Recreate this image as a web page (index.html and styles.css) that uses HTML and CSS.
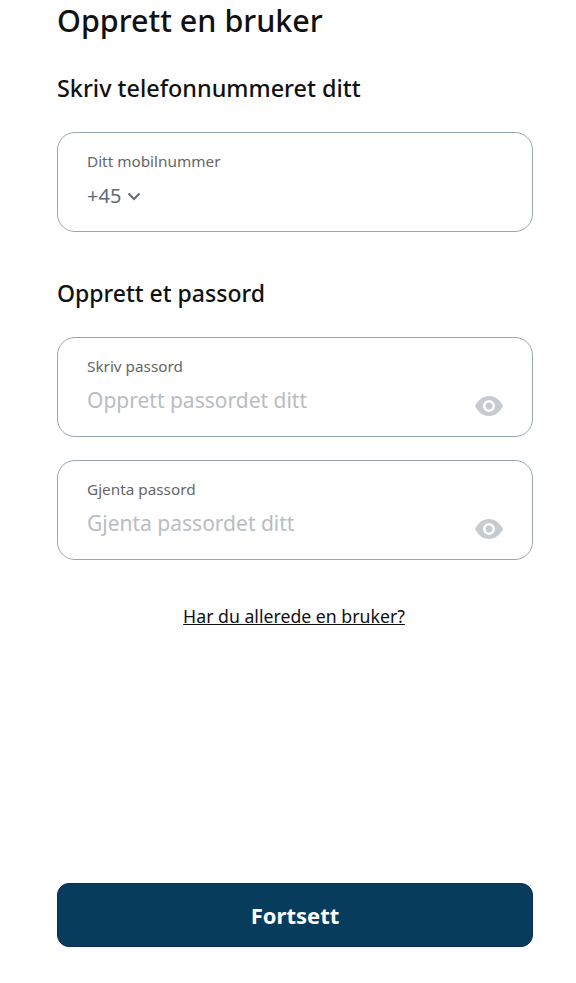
FILE: index.html
```html
<!DOCTYPE html>
<html lang="nb">
<head>
    <meta charset="UTF-8">
    <meta name="viewport" content="width=device-width, initial-scale=1.0">
    <title>Opprett en bruker</title>
    <link rel="stylesheet" href="styles.css">
</head>
<body>
    <main class="page">
        <h1>Opprett en bruker</h1>

        <h2 class="phone-heading">Skriv telefonnummeret ditt</h2>
        <div class="field">
            <label>Ditt mobilnummer</label>
            <div class="prefix">
                <span>+45</span>
                <svg class="chevron" viewBox="0 0 14 9" width="14" height="9" aria-hidden="true">
                    <path d="M1.500 1.500 7 7l5.500-5.500" fill="none" stroke="#5f6b78" stroke-width="2"/>
                </svg>
            </div>
        </div>

        <h2 class="password-heading">Opprett et passord</h2>
        <div class="field">
            <label>Skriv passord</label>
            <div class="placeholder">Opprett passordet ditt</div>
            <svg class="eye" viewBox="0 0 28 20" width="28" height="20" aria-hidden="true">
                <path fill-rule="evenodd" d="M14 0C8 0 3 4 0 10c3 6 8 10 14 10s11-4 14-10C25 4 20 0 14 0zm0 16a6 6 0 1 1 0-12 6 6 0 0 1 0 12zm0-9.500a3.500 3.500 0 1 0 0 7 3.500 3.500 0 0 0 0-7z" fill="#c5cbd1"/>
            </svg>
        </div>
        <div class="field second">
            <label>Gjenta passord</label>
            <div class="placeholder">Gjenta passordet ditt</div>
            <svg class="eye" viewBox="0 0 28 20" width="28" height="20" aria-hidden="true">
                <path fill-rule="evenodd" d="M14 0C8 0 3 4 0 10c3 6 8 10 14 10s11-4 14-10C25 4 20 0 14 0zm0 16a6 6 0 1 1 0-12 6 6 0 0 1 0 12zm0-9.500a3.500 3.500 0 1 0 0 7 3.500 3.500 0 0 0 0-7z" fill="#c5cbd1"/>
            </svg>
        </div>

        <a class="login-link" href="#">Har du allerede en bruker?</a>

        <button class="continue">Fortsett</button>
    </main>
</body>
</html>
```

FILE: styles.css
```css
/* Basic Styling */
* {
    box-sizing: border-box;
}
body {
    margin: 0;
    background: #fff;
    font-family: "Noto Sans", "Open Sans", sans-serif;
    color: #111;
}
.page {
    display: flex;
    flex-direction: column;
    height: 983px;
    padding: 0 43px 36px 57px;
    overflow: hidden;
}
h1 {
    margin: 0;
    height: 43px;
    font-size: 30.5px;
    line-height: 40px;
    font-weight: 500;
}
h2 {
    margin: 0;
    font-size: 23px;
    line-height: 32px;
    font-weight: 500;
}
.phone-heading {
    margin-top: 29px;
    margin-bottom: 28px;
    font-size: 23.4px;
}
.password-heading {
    margin-top: 45px;
    margin-bottom: 28px;
}
.field {
    position: relative;
    height: 100px;
    padding: 17px 29px 0;
    border: 1px solid #98a6b2;
    border-radius: 18px;
}
.field.second {
    margin-top: 23px;
}
.field label {
    display: block;
    font-size: 15.3px;
    line-height: 22px;
    color: #666;
}
.prefix {
    display: flex;
    align-items: center;
    gap: 6px;
    margin-top: 10px;
    font-size: 20px;
    line-height: 28px;
    color: #5f6b78;
}
.chevron {
    margin-top: 1px;
}
.placeholder {
    margin-top: 8px;
    font-size: 21px;
    line-height: 30px;
    color: #b9bdc1;
}
.eye {
    position: absolute;
    right: 29px;
    bottom: 20px;
}
.login-link {
    margin-top: 44px;
    margin-right: 2px;
    align-self: center;
    font-size: 17.7px;
    line-height: 24px;
    color: #111;
}
.continue {
    margin-top: auto;
    height: 64px;
    border: 1px solid #0b2a55;
    border-radius: 12px;
    background: #083c5d;
    color: #fff;
    font-family: inherit;
    font-size: 22px;
    font-weight: 700;
}
```
